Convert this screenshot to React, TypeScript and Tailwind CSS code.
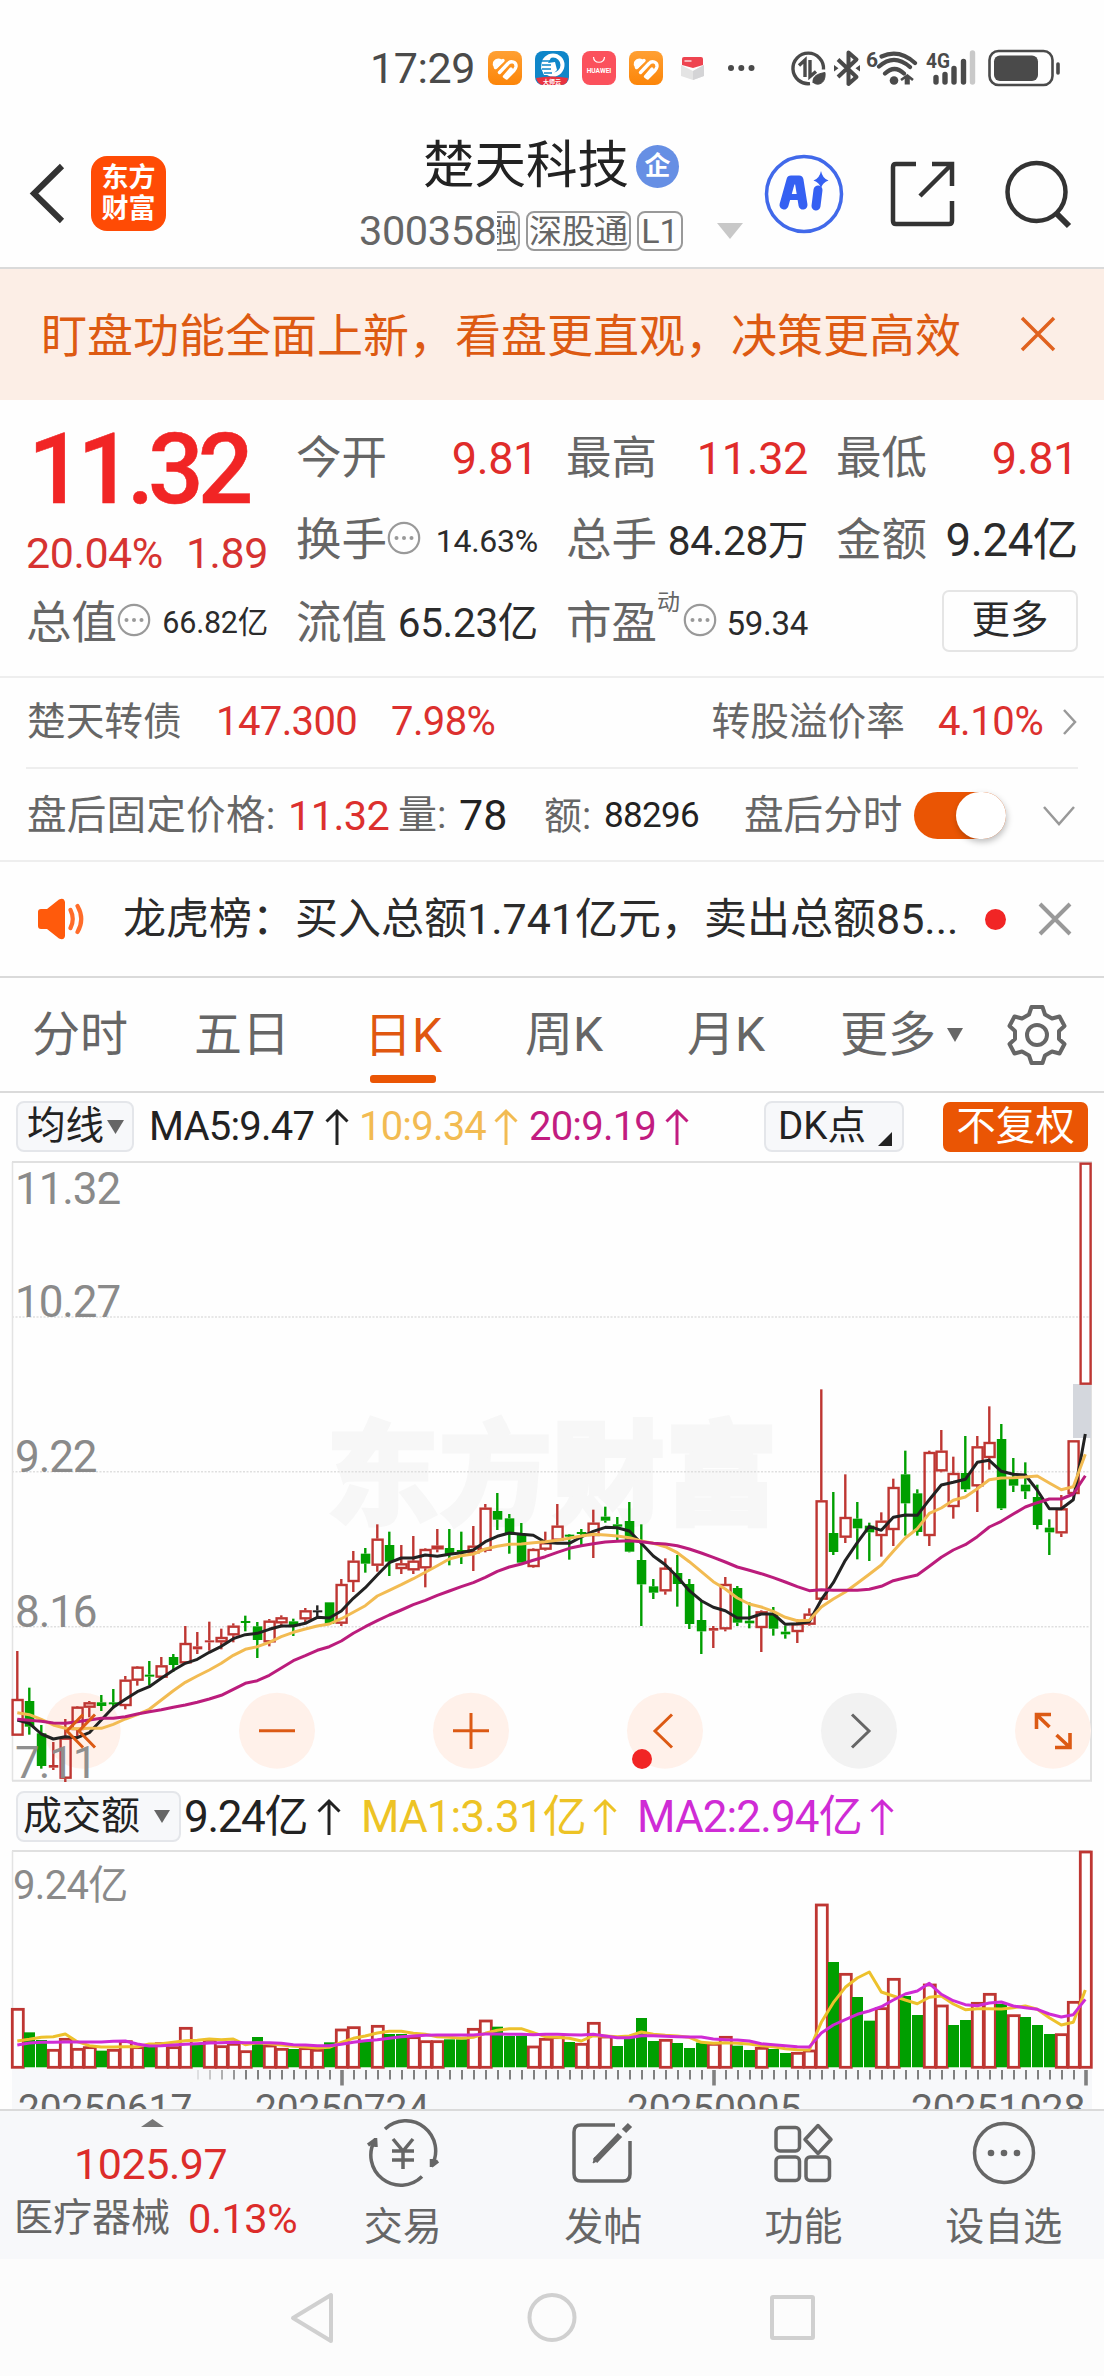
import React from "react";

const UP = "#be3632";
const DOWN = "#009f00";

/* Chart units are thirds of a pixel; price rows: [kind, high, low, bodyTop, bodyBottom], offset 1380px */
type Candle = [string, number, number, number, number];
const candles: Candle[] = [
  ["r", 813, 1067, 957, 1067], ["g", 923, 1064, 963, 1040], ["g", 1035, 1166, 1060, 1158], ["r", 1086, 1170, 1155, 1163],
  ["r", 1017, 1206, 1073, 1196], ["r", 978, 1070, 980, 1050], ["r", 963, 1012, 967, 983], ["g", 945, 993, 967, 978],
  ["g", 927, 985, 967, 971], ["r", 888, 988, 899, 978], ["r", 858, 917, 860, 902], ["g", 843, 916, 884, 890],
  ["r", 831, 897, 856, 893], ["g", 822, 875, 831, 855], ["r", 738, 850, 789, 850], ["r", 756, 822, 799, 808],
  ["r", 725, 812, 781, 787], ["r", 746, 808, 771, 787], ["r", 730, 787, 737, 766], ["g", 707, 754, 723, 729],
  ["g", 726, 834, 739, 780], ["r", 717, 799, 722, 787], ["r", 706, 742, 712, 730], ["g", 716, 768, 724, 736],
  ["r", 684, 727, 691, 718], ["k", 676, 710, 691, 695], ["g", 667, 735, 667, 732], ["r", 597, 738, 612, 731],
  ["r", 513, 636, 542, 606], ["g", 504, 578, 521, 551], ["r", 433, 575, 476, 557], ["g", 455, 588, 495, 545],
  ["r", 495, 582, 550, 567], ["r", 468, 582, 542, 571], ["r", 505, 622, 507, 565], ["r", 447, 517, 497, 508],
  ["g", 447, 556, 504, 522], ["g", 455, 552, 510, 520], ["r", 438, 573, 497, 520], ["r", 372, 517, 383, 512],
  ["g", 339, 450, 393, 419], ["g", 402, 521, 415, 465], ["g", 429, 548, 463, 548], ["r", 505, 563, 507, 561],
  ["r", 455, 512, 487, 509], ["r", 372, 480, 437, 482], ["g", 462, 539, 464, 469], ["g", 447, 495, 456, 460],
  ["r", 389, 534, 428, 468], ["g", 380, 428, 410, 422], ["g", 411, 480, 433, 440], ["g", 366, 517, 423, 515],
  ["g", 433, 738, 540, 613], ["g", 597, 657, 619, 638], ["r", 535, 644, 563, 634], ["g", 525, 680, 579, 612],
  ["g", 597, 747, 612, 732], ["g", 660, 822, 720, 754], ["r", 738, 804, 744, 752], ["r", 591, 754, 612, 748],
  ["g", 618, 738, 624, 728], ["g", 667, 745, 722, 730], ["r", 691, 816, 694, 744], ["g", 681, 767, 700, 746],
  ["g", 737, 776, 755, 763], ["r", 718, 789, 730, 756], ["r", 685, 737, 701, 734], ["r", 28, 663, 361, 659],
  ["g", 336, 525, 459, 516], ["r", 283, 489, 411, 473], ["g", 366, 538, 416, 445], ["g", 428, 543, 437, 457],
  ["r", 397, 530, 422, 468], ["r", 296, 498, 321, 450], ["g", 212, 467, 283, 370], ["g", 328, 467, 340, 456],
  ["r", 212, 498, 216, 468], ["r", 150, 277, 212, 274], ["r", 230, 416, 279, 381], ["g", 168, 336, 279, 328],
  ["r", 168, 396, 199, 319], ["r", 79, 269, 186, 234], ["g", 132, 390, 177, 385], ["g", 234, 336, 296, 317],
  ["g", 247, 357, 314, 334], ["g", 314, 448, 351, 435], ["g", 418, 525, 443, 457], ["r", 345, 471, 385, 460],
  ["r", 181, 345, 181, 342], ["r", -652, 14, -652, 14],
];
const ma5 = [1020, 1030, 1062, 1077, 1070, 1073, 1058, 1020, 982, 958, 935, 920, 895, 871, 850, 838, 817, 799, 776, 764, 760, 748, 738, 738, 730, 712, 714, 693, 655, 623, 585, 548, 534, 534, 525, 529, 523, 518, 510, 485, 469, 459, 463, 466, 487, 490, 490, 471, 454, 442, 443, 453, 490, 528, 554, 590, 632, 662, 682, 692, 714, 714, 702, 702, 733, 731, 725, 659, 608, 541, 488, 439, 451, 412, 405, 406, 359, 315, 307, 298, 247, 241, 274, 283, 285, 331, 386, 386, 359, 162];
const ma10 = [998, 1004, 1018, 1035, 1045, 1046, 1045, 1045, 1033, 1017, 1004, 988, 960, 932, 907, 888, 870, 850, 826, 808, 800, 787, 770, 757, 747, 738, 732, 716, 697, 677, 648, 631, 614, 596, 577, 557, 537, 527, 522, 507, 499, 493, 492, 488, 485, 481, 475, 468, 463, 465, 468, 473, 483, 490, 500, 518, 545, 575, 605, 627, 654, 672, 681, 694, 712, 722, 721, 681, 657, 636, 610, 583, 555, 514, 474, 446, 400, 384, 361, 351, 326, 299, 294, 293, 291, 288, 309, 329, 320, 223];
const ma20 = [1018, 1021, 1024, 1029, 1030, 1025, 1020, 1015, 1015, 1010, 1002, 995, 989, 982, 975, 967, 957, 946, 928, 910, 902, 886, 864, 842, 827, 811, 800, 783, 760, 740, 722, 705, 690, 674, 661, 646, 633, 620, 608, 592, 574, 561, 552, 541, 530, 517, 505, 497, 491, 486, 484, 482, 485, 490, 492, 497, 507, 519, 532, 546, 561, 571, 581, 593, 606, 620, 632, 629, 631, 631, 631, 628, 619, 602, 593, 585, 559, 532, 510, 494, 470, 441, 424, 402, 381, 368, 357, 357, 342, 287];

/* Turnover bar tops, in thirds of a pixel below 1780px; the floor is 862 */
const vol = [685, 757, 780, 808, 775, 805, 800, 812, 808, 782, 800, 793, 788, 800, 742, 795, 778, 797, 790, 812, 771, 795, 805, 807, 803, 808, 787, 747, 740, 780, 736, 762, 762, 770, 782, 782, 778, 778, 745, 720, 740, 768, 767, 798, 775, 770, 786, 790, 727, 768, 798, 766, 714, 783, 778, 789, 804, 788, 790, 769, 797, 810, 802, 807, 819, 817, 810, 372, 546, 580, 651, 722, 683, 595, 648, 705, 612, 675, 735, 720, 667, 640, 672, 704, 711, 735, 762, 761, 664, 213];
const fallingDays = [1, 2, 7, 11, 15, 20, 23, 26, 29, 31, 32, 36, 37, 40, 41, 42, 46, 50, 51, 52, 53, 55, 56, 57, 60, 61, 63, 64, 68, 70, 71, 74, 75, 78, 79, 82, 84, 85, 86];
const vma1 = [783, 778, 772, 770, 762, 785, 797, 801, 801, 800, 800, 792, 791, 787, 782, 781, 777, 779, 777, 794, 788, 791, 795, 799, 801, 804, 802, 787, 775, 768, 759, 754, 754, 760, 763, 770, 772, 775, 772, 760, 751, 746, 746, 758, 770, 772, 775, 783, 767, 768, 770, 768, 756, 763, 766, 768, 772, 787, 790, 788, 790, 792, 797, 800, 806, 809, 810, 727, 668, 622, 594, 576, 636, 648, 660, 671, 652, 648, 672, 689, 686, 686, 687, 683, 678, 688, 713, 735, 727, 630];
const vma2 = [795, 789, 787, 787, 786, 786, 786, 786, 784, 783, 792, 798, 797, 795, 793, 791, 789, 788, 787, 788, 788, 788, 790, 794, 795, 797, 797, 793, 787, 782, 779, 775, 770, 768, 766, 765, 765, 765, 765, 762, 762, 763, 763, 764, 763, 763, 764, 765, 763, 768, 773, 773, 767, 767, 769, 770, 771, 771, 777, 779, 780, 783, 791, 794, 797, 800, 801, 759, 735, 719, 703, 693, 680, 660, 642, 633, 610, 643, 662, 674, 677, 669, 666, 678, 683, 688, 702, 711, 704, 658];

const px = (i: number) => 17.3 + 12 * i;
const line = (v: number[], base: number) =>
  v.map((y, i) => `${px(i).toFixed(1)},${(base + y / 3).toFixed(1)}`).join(" ");

function Tri({ w, h, color, up }: { w: number; h: number; color: string; up?: boolean }) {
  return (
    <svg width={w} height={h} viewBox="0 0 10 10" preserveAspectRatio="none" className="block shrink-0">
      <path d={up ? "M0 10L5 0L10 10Z" : "M0 0L10 0L5 10Z"} fill={color} />
    </svg>
  );
}

function ArrowUp({ className = "" }: { className?: string }) {
  return (
    <svg width="24" height="38" viewBox="0 0 24 38" fill="none" stroke="currentColor" strokeWidth="3" className={`block shrink-0 ${className}`}>
      <path d="M12 37V3M1.5 13.5L12 3L22.5 13.5" />
    </svg>
  );
}

function Info() {
  return (
    <svg width="34" height="34" viewBox="0 0 34 34" className="block shrink-0">
      <circle cx="17" cy="17" r="15.2" fill="none" stroke="#999" strokeWidth="2.2" />
      <g fill="#999"><circle cx="9.5" cy="17" r="2" /><circle cx="17" cy="17" r="2" /><circle cx="24.5" cy="17" r="2" /></g>
    </svg>
  );
}

function HealthApp() {
  return (
    <svg width="34" height="34" viewBox="0 0 34 34" className="block shrink-0">
      <defs><linearGradient id="ho" x1="0" y1="0" x2="0" y2="1"><stop offset="0" stopColor="#ffa033" /><stop offset="1" stopColor="#fc8508" /></linearGradient></defs>
      <rect width="34" height="34" rx="8" fill="url(#ho)" />
      <path d="M15.500 10C13 6.500 7.500 6.500 5 11Q4 14 6 16.500L9 17.500Z" fill="#fff" />
      <g fill="none" stroke="#fff" strokeWidth="3.400" strokeLinecap="round" strokeLinejoin="round">
        <path d="M7.500 16.500L15 9.500" />
        <path d="M11.500 21.500L20 12.500C23 9 28.500 11 28 15.500Q27.700 17.500 26 19.500L18.500 27L16.500 25.500L23 18" />
      </g>
    </svg>
  );
}

function StatusBar() {
  return (
    <div className="flex h-[100px] items-center pt-[36px] text-[#4a4a4a]">
      <div className="ml-[370px] w-[118px] text-[43px] leading-none tracking-[-0.01em]">17:29</div>
      <div className="flex gap-[13px]">
        <HealthApp />
        <svg width="34" height="34" viewBox="0 0 34 34">
          <rect width="34" height="34" rx="8" fill="#0f86c9" />
          <circle cx="18" cy="14" r="9.500" fill="none" stroke="#fff" strokeWidth="4" />
          <path d="M17 5L13 12L20 11L22 19L17 24H9L6 17L8 8Z" fill="#fff" />
          <path d="M7 10h8M7 14h9M7 18h9M9 22h8" stroke="#0f86c9" strokeWidth="1.300" />
          <path d="M1 27Q17 24 33 27L32 31Q30 34 26 34H8Q3 34 1 27Z" fill="#e8323f" />
          <text x="17" y="32.500" fontSize="6" fill="#fff" textAnchor="middle" fontWeight="700">大师云</text>
        </svg>
        <svg width="34" height="34" viewBox="0 0 34 34">
          <rect width="34" height="34" rx="8" fill="#fb515c" />
          <path d="M11.500 6C12 13 22 13 22.500 6" fill="none" stroke="#fff" strokeWidth="1.200" />
          <text x="17" y="22" fontSize="6.600" fill="#fff" textAnchor="middle" fontWeight="700">HUAWEI</text>
        </svg>
        <HealthApp />
        <svg width="34" height="34" viewBox="0 0 34 34">
          <path d="M5 14L17 20L28 14V25L17 29L5 25Z" fill="#e4e4e4" /><path d="M17 20L28 14V25L17 29Z" fill="#d4d4d6" />
          <path d="M6 8Q6 6 8 6H25Q27 6 27 8V14L17 17L6 14Z" fill="#ee4450" />
          <path d="M8.500 10h7" stroke="#fff" strokeWidth="1.200" />
        </svg>
      </div>
      <svg width="28" height="10" viewBox="0 0 28 10" className="ml-[17px] shrink-0" fill="#4a4a4a"><circle cx="4" cy="5" r="3" /><circle cx="14.300" cy="5" r="3" /><circle cx="24.500" cy="5" r="3" /></svg>
      <svg width="290" height="42" viewBox="0 0 290 42" className="ml-[33px] shrink-0" fill="none" stroke="#4a4a4a">
        {/* battery saver data ring */}
        <path d="M22 36.600A15.300 15.300 0 1 1 35.500 22.500" strokeWidth="3.400" />
        <path d="M11 18.500L17 13V30M22 13V29.500L28 24.500" strokeWidth="3.400" />
        <path d="M25 36C24.500 29 29 27 37 25.500C38 34 33 39 26.500 36.500" fill="#4a4a4a" strokeWidth="1" />
        {/* bluetooth */}
        <path d="M50 12.500L68.500 30L60.500 37V5.500L68.500 12.500L50 30" strokeWidth="4" strokeLinejoin="round" />
        <path d="M46 18l4.500 3.200l-4.500 3.200ZM72 18l-4.500 3.200l4.500 3.200Z" fill="#4a4a4a" stroke="none" />
        {/* wifi */}
        <text x="78" y="20" fontSize="21" fontWeight="700" fill="#4a4a4a" stroke="none">6</text>
        <path d="M93.500 9.500Q111 1.500 127 16M91 19.500Q106 6 122 20M97 26.500Q106.500 17.500 116 26.500" strokeWidth="4.200" strokeLinecap="round" />
        <circle cx="106" cy="33.500" r="4.300" fill="#4a4a4a" stroke="none" />
        <path d="M113 33L118 29.500V37.500M120.500 37.500V29.500L125 33" strokeWidth="2.600" />
        {/* cellular */}
        <text x="138" y="21" fontSize="21" fontWeight="700" fill="#4a4a4a" stroke="none" textLength="24" lengthAdjust="spacingAndGlyphs">4G</text>
        <path d="M148 30.500V35M157 27.500V35M166 21.500V35M175.500 14.500V35" strokeWidth="5.400" strokeLinecap="round" />
        <path d="M184.500 6V35" stroke="#c9c9c9" strokeWidth="5.400" strokeLinecap="round" />
        {/* battery */}
        <rect x="201.500" y="4" width="63" height="34" rx="9" strokeWidth="2.600" />
        <rect x="206" y="8.500" width="44" height="25.500" rx="6" fill="#4a4a4a" stroke="none" />
        <path d="M270 17V26" strokeWidth="3.600" strokeLinecap="round" />
      </svg>
    </div>
  );
}

function Header() {
  return (
    <div className="flex h-[169px] items-center border-b-2 border-[#dadada] pt-[20px]">
      <svg width="38" height="64" viewBox="0 0 38 64" className="ml-[28px] shrink-0" fill="none" stroke="#333" strokeWidth="6"><path d="M34 4L6 31.500L34 59" /></svg>
      <div className="ml-[25px] flex h-[75px] w-[75px] shrink-0 flex-col items-center justify-center rounded-[16px] bg-[#ff4b05] text-[27px] font-bold leading-[31px] text-white">
        <span>东方</span><span>财富</span>
      </div>
      <div className="ml-[193px] w-[384px] shrink-0 pt-[10px]">
        <div className="flex h-[62px] items-center pl-[64px]">
          <span className="w-[213px] whitespace-nowrap text-[51.500px] leading-none text-[#222]">楚天科技</span>
          <span className="flex size-[43px] items-center justify-center rounded-full bg-[#668fe4] text-[26px] font-bold leading-none text-white">企</span>
        </div>
        <div className="mt-[3px] flex h-[62px] items-center whitespace-nowrap text-[#666]">
          <span className="w-[138px] text-[41.500px] leading-none tracking-[-0.01em]">300358</span>
          <span className="flex h-[40px] w-[23px] shrink-0 items-center justify-end overflow-hidden rounded-r-[8px] border-2 border-l-0 border-[#999] text-[32px] leading-none">
            <span className="pr-[1px]">融</span>
          </span>
          <span className="ml-[6px] flex h-[40px] w-[105px] shrink-0 items-center justify-center rounded-[8px] border-2 border-[#999] text-[33px] leading-none">深股通</span>
          <span className="ml-[6px] flex h-[40px] w-[46px] shrink-0 items-center justify-center rounded-[8px] border-2 border-[#999] text-[34px] leading-none">L1</span>
          <span className="ml-[34px]"><Tri w={26} h={16} color="#c8c8c8" /></span>
        </div>
      </div>
      <svg width="80" height="80" viewBox="0 0 80 80" className="ml-[21px] shrink-0">
        <circle cx="40" cy="40" r="37.500" fill="none" stroke="#4169ea" strokeWidth="3.500" />
        <g fill="none" stroke="#3560f2" strokeWidth="9" strokeLinejoin="round" strokeLinecap="round">
          <path d="M20 51L27 26H35L39 51" /><path d="M24 43H37" strokeWidth="6" />
          <path d="M54 36L52 52" />
        </g>
        <path d="M57 17Q58.500 24.500 64.500 26.500Q58.500 28.500 57 34Q55.500 28.500 49.500 26.500Q55.500 24.500 57 17Z" fill="#3560f2" />
      </svg>
      <svg width="66" height="66" viewBox="0 0 66 66" className="ml-[46px] shrink-0" fill="none" stroke="#333" strokeWidth="4.500">
        <path d="M26 3H6Q3 3 3 6V60Q3 63 6 63H59Q62 63 62 60V40M42 3H62V25M62 3L30 35" />
      </svg>
      <svg width="70" height="70" viewBox="0 0 70 70" className="ml-[47px] shrink-0" fill="none" stroke="#333" strokeWidth="4.500">
        <circle cx="33.500" cy="33" r="29" /><path d="M53 54L66 67" strokeWidth="6" />
      </svg>
    </div>
  );
}

function Cell({ label, info, sup, value, size, red }: { label: string; info?: boolean; sup?: string; value: string; size: string; red?: boolean }) {
  return (
    <div className="flex h-[82.500px] items-center whitespace-nowrap leading-none">
      <span className="text-[45.500px] text-[#666]">{label}</span>
      {sup && <span className="h-[82px] pt-[9px] text-[23px] text-[#666]">{sup}</span>}
      {info && <span className={sup ? "-mt-[6px] ml-[3px]" : "-mt-[6px]"}><Info /></span>}
      <span className={`ml-auto tracking-[-0.008em] ${size} ${red ? "text-[#e02c2a]" : "text-[#2b2b2b]"}`}>{value}</span>
    </div>
  );
}

function Quote() {
  return (
    <div className="grid h-[278px] grid-cols-4 gap-x-[28px] border-b-2 border-[#eeeeee] px-[26px] pt-[17px]">
      <div className="whitespace-nowrap">
        <div className="h-[106px] pl-[2px] pt-[5px] text-[98px] font-medium leading-[96px] tracking-[-0.063em] text-[#f12525] [-webkit-text-stroke:0.500px_#f12525]">11.32</div>
        <div className="flex h-[59px] items-center justify-between pt-[2px] text-[43px] leading-none tracking-[-0.010em] text-[#d63331]"><span>20.04%</span><span>1.89</span></div>
        <Cell label="总值" info value="66.82亿" size="text-[30.500px]" />
      </div>
      <div>
        <Cell label="今开" value="9.81" size="text-[45px]" red />
        <Cell label="换手" info value="14.63%" size="text-[32px]" />
        <Cell label="流值" value="65.23亿" size="text-[40.500px]" />
      </div>
      <div>
        <Cell label="最高" value="11.32" size="text-[45px]" red />
        <Cell label="总手" value="84.28万" size="text-[40.500px]" />
        <Cell label="市盈" info sup="动" value="59.34" size="text-[33px]" />
      </div>
      <div>
        <Cell label="最低" value="9.81" size="text-[45px]" red />
        <Cell label="金额" value="9.24亿" size="text-[45.500px]" />
        <div className="ml-auto mt-[8px] flex h-[62px] w-[136px] items-center justify-center rounded-[7px] border-2 border-[#e5e5e5] pb-px text-[38.500px] leading-none text-[#2b2b2b]">更多</div>
      </div>
    </div>
  );
}

function InfoRows() {
  return (
    <div className="whitespace-nowrap leading-none">
      <div className="px-[26px]">
        <div className="flex h-[91px] items-center border-b-2 border-[#eeeeee] pb-px text-[38.700px] text-[#666]">
          <span className="ml-px w-[189px]">楚天转债</span>
          <span className="w-[175px] text-[40px] tracking-[-0.015em] text-[#dc302e]">147.300</span>
          <span className="text-[40px] tracking-[-0.015em] text-[#dc302e]">7.98%</span>
          <span className="ml-auto">转股溢价率</span>
          <span className="ml-[33px] w-[108px] text-[40px] tracking-[-0.010em] text-[#dc302e]">4.10%</span>
          <svg width="16" height="28" viewBox="0 0 16 28" className="ml-[16px]" fill="none" stroke="#999" strokeWidth="2.500"><path d="M2 2L13 14L2 26" /></svg>
        </div>
      </div>
      <div className="flex h-[93px] items-center border-b-2 border-[#eeeeee] pl-[27px] pt-[2px] text-[39.600px] text-[#666]">
        <span className="w-[261px] tracking-[0.005em]">盘后固定价格:</span>
        <span className="w-[110px] text-[41.500px] tracking-[-0.015em] text-[#dc302e]">11.32</span>
        <span className="w-[61px] text-[39px]">量:</span>
        <span className="w-[85px] text-[43px] text-[#222]">78</span>
        <span className="w-[60px] text-[38px]">额:</span>
        <span className="w-[140px] text-[35px] tracking-[-0.020em] text-[#222]">88296</span>
        <span className="w-[170px]">盘后分时</span>
        <span className="flex h-[47px] w-[92px] justify-end rounded-full bg-[#ea5504]">
          <span className="h-[47px] w-[50px] rounded-full bg-white shadow-[1px_3px_6px_rgba(0,0,0,0.25)]" />
        </span>
        <svg width="34" height="22" viewBox="0 0 34 22" className="ml-[36px]" fill="none" stroke="#999" strokeWidth="2.500"><path d="M2 2L17 19L32 2" /></svg>
      </div>
      <div className="flex h-[116px] items-center border-b-2 border-[#dadada] text-[43px] text-[#2b2b2b]">
        <svg width="50" height="42" viewBox="0 0 50 42" className="ml-[37px] shrink-0">
          <path d="M1 14Q1 11 4 11H10L22 1.500Q27 -1 28 4V38Q27 43 22 40.500L10 31H4Q1 31 1 28Z" fill="#ff5a0c" />
          <path d="M33.500 12Q38 21 33.500 30M40.500 8Q48 21 40.500 34" fill="none" stroke="#ff6c2a" strokeWidth="4.200" strokeLinecap="round" />
        </svg>
        <span className="ml-[36px] w-[862px] shrink-0">龙虎榜：买入总额1.741亿元，卖出总额85...</span>
        <span className="size-[21px] shrink-0 rounded-full bg-[#f12525]" />
        <svg width="34" height="34" viewBox="0 0 34 34" className="ml-[32px] shrink-0" fill="none" stroke="#999" strokeWidth="4"><path d="M2 2L32 32M32 2L2 32" /></svg>
      </div>
    </div>
  );
}

function Tabs() {
  return (
    <div className="flex h-[115px] items-center whitespace-nowrap border-b-2 border-[#dadada] pl-[32px] text-[48px] leading-none text-[#666]">
      <span className="w-[162px]">分时</span>
      <span className="w-[170px]">五日</span>
      <span className="flex h-full w-[161px] flex-col pt-[34px] text-[#e0570f]">
        <span>日K</span>
        <span className="ml-[6px] mt-[15px] h-[8px] w-[66px] rounded-[3px] bg-[#ea5504]" />
      </span>
      <span className="w-[162px]">周K</span>
      <span className="w-[153px]">月K</span>
      <span className="w-[107px]">更多</span>
      <Tri w={16} h={14} color="#666" />
      <svg width="62" height="62" viewBox="-31 -31 62 62" className="ml-[43px]" fill="none" stroke="#666" strokeWidth="4" strokeLinejoin="round">
        <path d="M-5.500 -28H5.500L8 -20.500L15 -16.500L22.500 -18.500L27.500 -9L22 -4V4L27.500 9L22.500 18.500L15 16.500L8 20.500L5.500 28H-5.500L-8 20.500L-15 16.500L-22.500 18.500L-27.500 9L-22 4V-4L-27.500 -9L-22.500 -18.500L-15 -16.500L-8 -20.500Z" />
        <circle r="10" />
      </svg>
    </div>
  );
}

function MaRow() {
  return (
    <div className="flex h-[67px] items-center whitespace-nowrap text-[40px] leading-none tracking-[-0.020em]">
      <span className="ml-[16px] flex h-[51px] w-[118px] items-center gap-[3px] rounded-[8px] border-2 border-[#e4e6ea] bg-[#f7f8fa] pl-[9px] text-[38.500px] tracking-normal text-[#222]">
        均线<Tri w={17} h={14} color="#666" />
      </span>
      <span className="ml-[15px] w-[176px] text-[#222]">MA5:9.47</span>
      <ArrowUp className="text-[#222]" />
      <span className="ml-[10px] w-[135px] text-[#f2bb52]">10:9.34</span>
      <ArrowUp className="text-[#f2bb52]" />
      <span className="ml-[11px] w-[136px] text-[#c21c80]">20:9.19</span>
      <ArrowUp className="text-[#c21c80]" />
      <span className="ml-[75px] flex h-[51px] w-[140px] items-center rounded-[8px] border-2 border-[#e4e6ea] bg-[#f7f8fa] pl-[12px] text-[38.500px] tracking-normal text-[#222]">
        DK点
        <svg width="14" height="14" viewBox="0 0 14 14" className="ml-[12px] mt-[24px]"><path d="M14 0V14H0Z" fill="#222" /></svg>
      </span>
      <span className="ml-[39px] flex h-[50px] w-[145px] items-center justify-center rounded-[7px] bg-[#ea5504] text-[39.500px] tracking-normal text-white">不复权</span>
    </div>
  );
}

function PriceChart() {
  return (
    <svg width="1104" height="623" viewBox="0 1160 1104 623" className="block">
      <text x="326" y="1515" fontSize="113" fontWeight="900" fill="#f7f7f7" stroke="#f7f7f7" strokeWidth="3">东方财富</text>
      {[1317, 1471.7, 1626.7].map((y) => (
        <path key={y} d={`M12 ${y}H1091`} stroke="#dfdfdf" strokeWidth="1.600" strokeDasharray="2 1.500" />
      ))}
      <path d="M12.500 1162V1780.700" stroke="#e3e3e3" strokeWidth="1.500" />
      <path d="M12 1162H1091V1780.700H12" fill="none" stroke="#e0e0e0" strokeWidth="2" />
      <rect x="1073" y="1384" width="18" height="54" fill="#d4d7dd" />
      {[82.7, 277, 471, 665, 859, 1053].map((x, i) => (
        <circle key={x} cx={x} cy="1730.700" r="38" fill={i === 4 ? "#f2f2f2" : "#fff1ea"} />
      ))}
      {candles.map(([k, h, l, t, b], i) => {
        const c = k === "r" ? UP : k === "g" ? DOWN : "#222";
        const y = (v: number) => 1380 + v / 3;
        const x = px(i);
        const bh = Math.max((b - t) / 3, 2);
        const hollow = k === "r" && b - t > 9;
        return (
          <g key={i} stroke={c} strokeWidth="2.400">
            {h < t && <path d={`M${x} ${y(h)}V${y(t)}`} />}
            {l > b && <path d={`M${x} ${y(b)}V${y(l)}`} />}
            {hollow ? (
              <rect x={x - 4.700} y={y(t) + 1} width="10" height={bh - 2} fill="none" />
            ) : (
              <rect x={x - 4.500} y={y(t)} width="9.500" height={bh} fill={c} stroke="none" />
            )}
          </g>
        );
      })}
      <g fill="none" strokeWidth="3" strokeLinejoin="round">
        <polyline points={line(ma5, 1380)} stroke="#222" />
        <polyline points={line(ma10, 1380)} stroke="#f2bb52" />
        <polyline points={line(ma20, 1380)} stroke="#bb1c7c" />
      </g>
      <g fill="#8a8a8a" fontSize="44" letterSpacing="-1.100">
        <text x="15" y="1204">11.32</text>
        <text x="15" y="1317">10.27</text>
        <text x="15" y="1472">9.22</text>
        <text x="15" y="1627">8.16</text>
        <text x="15" y="1778" opacity="0.950">7.11</text>
      </g>
      <g fill="none" stroke="#dc5a14" strokeWidth="3">
        <path d="M83 1714.500L67 1731L83 1747.500M95 1714.500L79 1731L95 1747.500" />
        <path d="M259 1730.700H295" />
        <path d="M453 1730.700H489M471 1713V1749" />
        <path d="M672 1714.500L655 1731L672 1747.500" />
        <path d="M852 1714.500L869 1731L852 1747.500" stroke="#666" />
        <path d="M1051 1714.500H1036.500V1729M1036.500 1714.500L1049.500 1727M1055 1747.500H1070V1733M1070 1747.500L1056.500 1735" strokeWidth="3.600" />
      </g>
      <circle cx="642" cy="1759" r="10" fill="#f12525" />
    </svg>
  );
}

function VolumeHeader() {
  return (
    <div className="flex h-[67px] items-center whitespace-nowrap text-[44px] leading-none tracking-[-0.030em]">
      <span className="ml-[16px] flex h-[51px] w-[165px] items-center rounded-[8px] border-2 border-[#e4e6ea] bg-[#f7f8fa] pl-[5px] text-[39px] tracking-normal text-[#222]">
        成交额<span className="ml-[14px]"><Tri w={16} h={13} color="#666" /></span>
      </span>
      <span className="ml-[3px] w-[133px] text-[#222]">9.24亿</span>
      <ArrowUp className="text-[#222]" />
      <span className="ml-[20px] w-[232px] tracking-[-0.020em] text-[#edc325]">MA1:3.31亿</span>
      <ArrowUp className="text-[#edc325]" />
      <span className="ml-[20px] w-[233px] tracking-[-0.020em] text-[#cf2bd5]">MA2:2.94亿</span>
      <ArrowUp className="text-[#cf2bd5]" />
    </div>
  );
}

function VolumeChart() {
  return (
    <svg width="1104" height="259" viewBox="0 1850 1104 259" className="block">
      <rect x="12" y="2068" width="1080" height="41" fill="#f7f8fa" />
      <path d="M12 1851H1091" stroke="#e0e0e0" strokeWidth="2" />
      <path d="M12.500 1851V2068M1090.500 1851V2068" stroke="#e3e3e3" strokeWidth="1.500" />
      <text x="13" y="1899" fontSize="40" fill="#8a8a8a" letterSpacing="-0.700">9.24亿</text>
      {vol.map((v, i) => {
        const top = 1780 + v / 3;
        return fallingDays.includes(i) ? (
          <rect key={i} x={px(i) - 5.300} y={top} width="11" height={2067.3 - top} fill={DOWN} />
        ) : (
          <rect key={i} x={px(i) - 5} y={top + 1} width="11" height={2066.3 - top} fill="#fff" stroke={UP} strokeWidth="2.800" />
        );
      })}
      <g fill="none" strokeWidth="3" strokeLinejoin="round">
        <polyline points={line(vma1, 1780)} stroke="#edc12c" />
        <polyline points={line(vma2, 1780)} stroke="#cf2bd5" />
      </g>
      {vol.map((_, i) => {
        if (i < 15) return null;
        const big = i === 27 || i === 58 || i === 89;
        return (
          <path key={i} d={`M${px(i) + 0.7} 2070V${big ? 2085.5 : 2079.5}`} stroke="#808080" strokeWidth={big ? 3.600 : 2} opacity={Math.min(1, (i - 14) * 0.2)} />
        );
      })}
      <g fill="#666" fontSize="39" letterSpacing="-0.150">
        <text x="18" y="2121.500">20250617</text>
        <text x="255" y="2121.500">20250724</text>
        <text x="627" y="2121.500">20250905</text>
        <text x="911" y="2121.500">20251028</text>
      </g>
    </svg>
  );
}

function BottomItem({ label, children }: { label: string; children: React.ReactNode }) {
  return (
    <div className="flex w-[200.500px] flex-col items-center text-[39px] leading-none text-[#666]">
      <svg width="76" height="68" viewBox="-38 -34 76 68" className="mt-[8px]" fill="none" stroke="#666" strokeWidth="3.500">{children}</svg>
      <span className="mt-[21px]">{label}</span>
    </div>
  );
}

function BottomBar() {
  return (
    <div className="flex h-[150px] border-t-2 border-[#dadada] bg-[#f7f8fa]">
      <div className="flex w-[303px] flex-col whitespace-nowrap leading-none">
        <div className="ml-[141px] mt-[8px]"><Tri w={23} h={8} color="#777" up /></div>
        <div className="ml-[74px] mt-[16px] text-[43px] tracking-[-0.010em] text-[#dc2c2a]">1025.97</div>
        <div className="mt-[12px] flex items-center text-[39px] text-[#666]">
          <span className="ml-[14px] w-[174px]">医疗器械</span>
          <span className="text-[41.500px] tracking-[-0.010em] text-[#dc2c2a]">0.13%</span>
        </div>
      </div>
      <BottomItem label="交易">
        <path d="M-18 -24A30 30 0 0 1 28.500 13L35 8M28.500 14V6" />
        <path d="M19 23.500A30 30 0 0 1 -28 -13L-35 -8M-27.500 -15L-27 -6" />
        <path d="M-10 -14L0 -2L10 -14M0 -3V16M-11 -2H11M-11 7H11" />
      </BottomItem>
      <BottomItem label="发帖">
        <path d="M12 -28H-22Q-29 -28 -29 -21V21Q-29 28 -22 28H20Q27 28 27 21V-12" />
        <path d="M-8 8L17 -18M21 -22L27 -28" strokeWidth="6" />
        <path d="M-10 10L-4 7L-8 4Z" fill="#666" strokeWidth="1" />
      </BottomItem>
      <BottomItem label="功能">
        <rect x="-28" y="-25.500" width="23.500" height="23.500" rx="4" />
        <rect x="-28" y="4" width="23.500" height="23.500" rx="4" />
        <rect x="2" y="4" width="23.500" height="23.500" rx="4" />
        <path d="M14 -27.500L27 -13.500L14 0.500L1 -13.500Z" strokeLinejoin="round" />
      </BottomItem>
      <BottomItem label="设自选">
        <circle r="29.500" />
        <g fill="#666" stroke="none"><circle cx="-13" cy="0" r="3.300" /><circle cx="0" cy="0" r="3.300" /><circle cx="13" cy="0" r="3.300" /></g>
      </BottomItem>
    </div>
  );
}

function SystemNav() {
  return (
    <div className="flex h-[117px] items-start bg-[#fcfcfc] pt-[32px]">
      <svg width="1104" height="56" viewBox="0 0 1104 56" fill="none" stroke="#d0d0d0" strokeWidth="4" strokeLinejoin="round">
        <path d="M331 4V50L293 27Z" />
        <circle cx="552" cy="26.500" r="22.500" />
        <rect x="772" y="6" width="41" height="41" rx="1" />
      </svg>
    </div>
  );
}

export default function App() {
  return (
    <div className="h-[2376px] w-[1104px] overflow-hidden bg-[#fefefe] font-[Roboto,'Noto_Sans_CJK_SC',sans-serif]">
      <StatusBar />
      <Header />
      <div className="flex h-[131px] items-center bg-[#fceee6] pl-[41px] pt-[3px] text-[46px] leading-none text-[#dd5a12]">
        <span className="w-[979px] whitespace-nowrap">盯盘功能全面上新，看盘更直观，决策更高效</span>
        <svg width="36" height="36" viewBox="0 0 36 36" fill="none" stroke="#e0621f" strokeWidth="3.500" className="-mt-[4px]"><path d="M2 2L34 34M34 2L2 34" /></svg>
      </div>
      <Quote />
      <InfoRows />
      <Tabs />
      <MaRow />
      <PriceChart />
      <VolumeHeader />
      <VolumeChart />
      <BottomBar />
      <SystemNav />
    </div>
  );
}
